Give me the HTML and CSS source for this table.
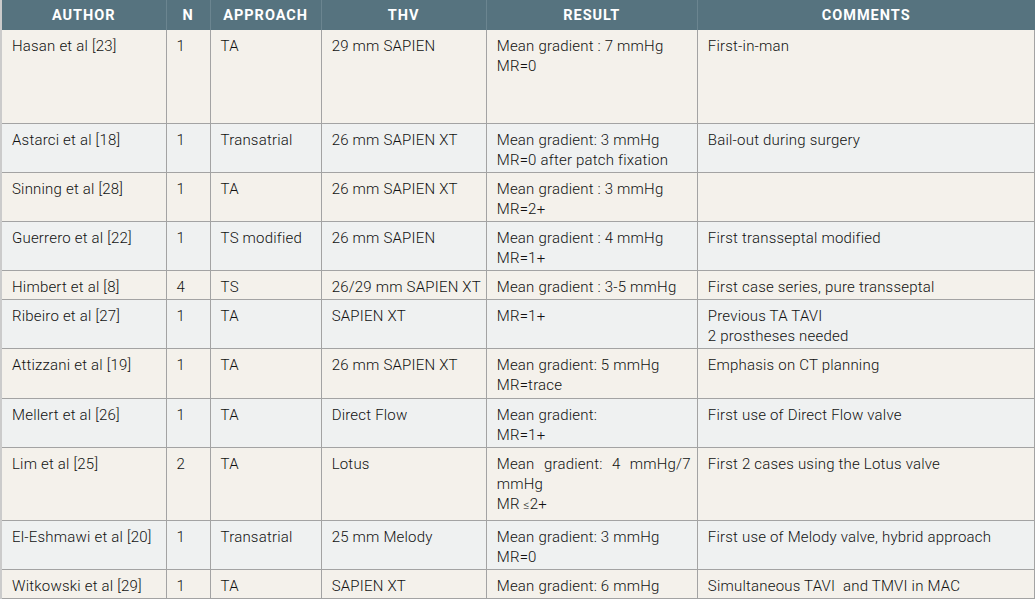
FILE: index.html
```html
<!DOCTYPE html>
<html>
<head>
<meta charset="utf-8">
<link rel="stylesheet" href="styles.css">
</head>
<body>
<table class="tbl">
  <colgroup>
    <col class="c-author"><col class="c-n"><col class="c-app"><col class="c-thv"><col class="c-res"><col class="c-com">
  </colgroup>
  <thead>
    <tr class="head"><th>AUTHOR</th><th>N</th><th>APPROACH</th><th>THV</th><th>RESULT</th><th>COMMENTS</th></tr>
  </thead>
  <tbody>
    <tr class="odd h93"><td>Hasan et al [23]</td><td>1</td><td>TA</td><td>29 mm SAPIEN</td><td>Mean gradient : 7 mmHg<br>MR=0</td><td>First-in-man</td></tr>
    <tr class="even h49"><td>Astarci et al [18]</td><td>1</td><td>Transatrial</td><td>26 mm SAPIEN XT</td><td>Mean gradient: 3 mmHg<br>MR=0 after patch fixation</td><td>Bail-out during surgery</td></tr>
    <tr class="odd h49"><td>Sinning et al [28]</td><td>1</td><td>TA</td><td>26 mm SAPIEN XT</td><td>Mean gradient : 3 mmHg<br>MR=2+</td><td></td></tr>
    <tr class="even h49"><td>Guerrero et al [22]</td><td>1</td><td>TS modified</td><td>26 mm SAPIEN</td><td>Mean gradient : 4 mmHg<br>MR=1+</td><td>First transseptal modified</td></tr>
    <tr class="odd h29"><td>Himbert et al [8]</td><td>4</td><td>TS</td><td>26/29 mm SAPIEN XT</td><td>Mean gradient : 3-5 mmHg</td><td>First case series, pure transseptal</td></tr>
    <tr class="even h49"><td>Ribeiro et al [27]</td><td>1</td><td>TA</td><td>SAPIEN XT</td><td>MR=1+</td><td>Previous TA TAVI<br>2 prostheses needed</td></tr>
    <tr class="odd h50"><td>Attizzani et al [19]</td><td>1</td><td>TA</td><td>26 mm SAPIEN XT</td><td>Mean gradient: 5 mmHg<br>MR=trace</td><td>Emphasis on CT planning</td></tr>
    <tr class="even h49"><td>Mellert et al [26]</td><td>1</td><td>TA</td><td>Direct Flow</td><td>Mean gradient:<br>MR=1+</td><td>First use of Direct Flow valve</td></tr>
    <tr class="odd h73"><td>Lim et al [25]</td><td>2</td><td>TA</td><td>Lotus</td><td><span class="jline">Mean gradient: 4 mmHg/7</span>mmHg<br>MR <span class="le">≤</span>2+</td><td>First 2 cases using the Lotus valve</td></tr>
    <tr class="even h49"><td>El-Eshmawi et al [20]</td><td>1</td><td>Transatrial</td><td>25 mm Melody</td><td>Mean gradient: 3 mmHg<br>MR=0</td><td>First use of Melody valve, hybrid approach</td></tr>
    <tr class="odd h29"><td>Witkowski et al [29]</td><td>1</td><td>TA</td><td>SAPIEN XT</td><td>Mean gradient: 6 mmHg</td><td>Simultaneous TAVI&nbsp; and TMVI in MAC</td></tr>
  </tbody>
</table>
</body>
</html>
```
FILE: styles.css
```css
html, body {
  margin: 0;
  padding: 0;
  background: #ffffff;
}
.tbl {
  width: 1035px;
  border-collapse: collapse;
  table-layout: fixed;
  font-family: Roboto, "Liberation Sans", sans-serif;
  font-weight: 300;
  font-size: 15px;
  color: #111111;
  border-left: 2px solid #cbcbcb;
}
.c-author { width: 165px; }
.c-n { width: 44px; }
.c-app { width: 111px; }
.c-thv { width: 165px; }
.c-res { width: 211px; }
.c-com { width: 337px; }
.head th {
  height: 30px;
  padding: 0;
  background: #56737f;
  color: #ffffff;
  font-weight: 700;
  font-size: 14.5px;
  letter-spacing: 1px;
  text-align: center;
  border-left: 1px solid #6b8590;
}
.head th:first-child { border-left: none; }
td {
  vertical-align: top;
  padding: 6px 6px 0 10px;
  line-height: 20px;
  letter-spacing: 0.2px;
  border: 1px solid #a3a3a3;
  overflow: hidden;
  white-space: nowrap;
}
td:first-child { border-left: none; }
tbody tr:first-child td { border-top: none; }
.odd td { background: #f4f1eb; }
.even td { background: #eff1f1; }
.h29 { height: 29px; }
.h49 { height: 49px; }
.h50 { height: 50px; }
.h73 { height: 73px; }
.h93 { height: 93px; }
.jline {
  display: block;
  white-space: normal;
  text-align: justify;
  text-align-last: justify;
}
.le { font-size: 12px; }
```
